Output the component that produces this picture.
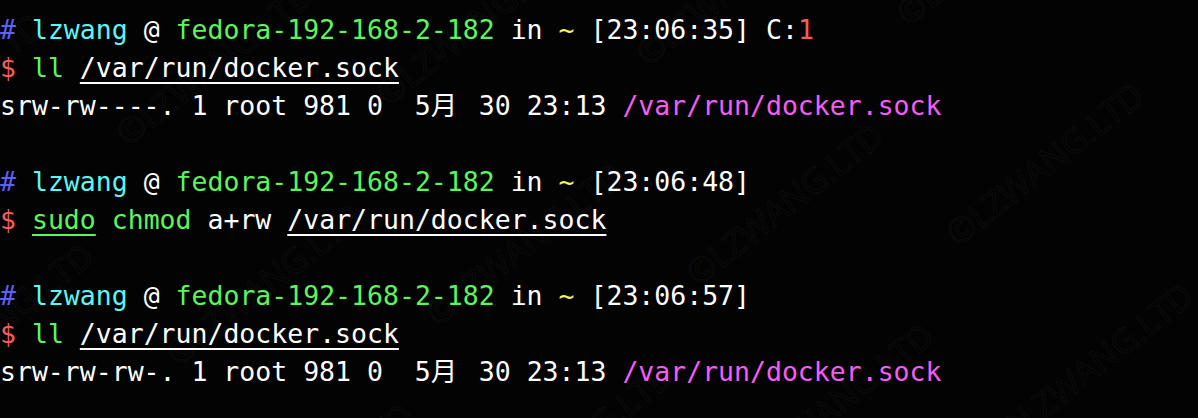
import React from 'react';

const Prompt = ({ time, code }: { time: string; code?: string }) => (
  <div>
    <span className="text-[#5f5fff]">#</span> <span className="text-[#5ef5f5]">lzwang</span>{' '}
    <span className="text-white">@</span> <span className="text-[#5cf55c]">fedora-192-168-2-182</span>{' '}
    <span className="text-white">in</span> <span className="text-[#f5f55c]">~</span>{' '}
    <span className="text-white">[{time}]</span>
    {code && (
      <>
        {' '}
        <span className="text-white">C:</span>
        <span className="text-[#f55c5c]">{code}</span>
      </>
    )}
  </div>
);

const Path = ({ children }: { children: React.ReactNode }) => (
  <span className="text-white underline decoration-2 underline-offset-[5px]">{children}</span>
);

const LsLine = ({ mode }: { mode: string }) => (
  <div className="text-white">
    {mode}. 1 root 981 0{'  '}5<span className="inline-block w-[32px]">月</span> 30 23:13{' '}
    <span className="text-[#f55cf5]">/var/run/docker.sock</span>
  </div>
);

// faint tiled watermark
const marks = [
  [-150, 150], [120, 120], [380, 80], [640, 40], [900, 0], [1150, -40],
  [-100, 380], [170, 340], [430, 300], [690, 260], [950, 220], [1200, 180],
  [220, 540], [480, 500], [740, 460], [1000, 420],
];

const App = () => {
  return (
    <div
      className="relative h-[418px] w-full overflow-hidden bg-[#030303] pt-[11px] text-[26.5px] leading-[38px] whitespace-pre text-white"
      style={{ fontFamily: '"DejaVu Sans Mono", "Noto Sans CJK SC", monospace' }}
    >
      <Prompt time="23:06:35" code="1" />
      <div>
        <span className="text-[#f55c5c]">$</span> <span className="text-[#5cf55c]">ll</span>{' '}
        <Path>/var/run/docker.sock</Path>
      </div>
      <LsLine mode="srw-rw----" />
      <div>&nbsp;</div>
      <Prompt time="23:06:48" />
      <div>
        <span className="text-[#f55c5c]">$</span>{' '}
        <span className="text-[#5cf55c] underline decoration-2 underline-offset-[5px]">sudo</span>{' '}
        <span className="text-[#5cf55c]">chmod</span> <span className="text-white">a+rw</span>{' '}
        <Path>/var/run/docker.sock</Path>
      </div>
      <div>&nbsp;</div>
      <Prompt time="23:06:57" />
      <div>
        <span className="text-[#f55c5c]">$</span> <span className="text-[#5cf55c]">ll</span>{' '}
        <Path>/var/run/docker.sock</Path>
      </div>
      <LsLine mode="srw-rw-rw-" />

      <div className="pointer-events-none absolute inset-0" aria-hidden="true">
        {marks.map(([x, y], i) => (
          <span
            key={i}
            className="absolute origin-left -rotate-[38deg] text-[34px] leading-none text-transparent"
            style={{
              left: x,
              top: y,
              fontFamily: '"Open Sans", sans-serif',
              WebkitTextStroke: '1px rgba(255,255,255,0.055)',
            }}
          >
            ©LZWANG.LTD
          </span>
        ))}
      </div>
    </div>
  );
};

export default App;
